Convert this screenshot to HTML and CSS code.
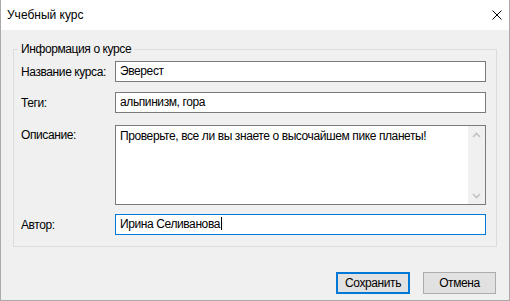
FILE: index.html
```html
<!DOCTYPE html>
<html lang="ru">
<head>
  <meta charset="UTF-8">
  <title>Учебный курс</title>
  <link rel="stylesheet" href="styles.css">
</head>
<body>
  <div class="window">
    <div class="titlebar">
      <span class="title">Учебный курс</span>
      <svg class="close" width="10" height="10" viewBox="0 0 10 10">
        <path d="M0.5 0.5 L9.5 9.5 M9.5 0.5 L0.5 9.5" stroke="#000" stroke-width="1" fill="none"/>
      </svg>
    </div>
    <div class="content">
      <fieldset class="group">
        <legend>Информация о курсе</legend>
        <div class="form">
          <label class="label">Название курса:</label>
          <div class="field">Эверест</div>

          <label class="label">Теги:</label>
          <div class="field">альпинизм, гора</div>

          <label class="label label-top desc">Описание:</label>
          <div class="memo desc">
            <div class="memo-text">Проверьте, все ли вы знаете о высочайшем пике планеты!</div>
            <div class="scrollbar">
              <svg width="9" height="6" viewBox="0 0 9 6"><path d="M1 5 L4.5 1.5 L8 5" stroke="#c2c2c2" stroke-width="1.6" fill="none"/></svg>
              <svg width="9" height="6" viewBox="0 0 9 6"><path d="M1 1 L4.5 4.5 L8 1" stroke="#c2c2c2" stroke-width="1.6" fill="none"/></svg>
            </div>
          </div>

          <label class="label author">Автор:</label>
          <div class="field field-focus author">Ирина Селиванова<span class="caret"></span></div>
        </div>
      </fieldset>
      <div class="buttons">
        <button class="btn btn-default">Сохранить</button>
        <button class="btn">Отмена</button>
      </div>
    </div>
  </div>
</body>
</html>
```

FILE: styles.css
```css
:root {
  --font-ui: "Segoe UI", "Liberation Sans", sans-serif;
  --color-face: #f0f0f0;
  --color-frame: #aaaaaa;
  --color-group: #dcdcdc;
  --color-edit: #7a7a7a;
  --color-focus: #0078d7;
  --color-button: #e1e1e1;
  --color-button-border: #adadad;
}

* {
  box-sizing: border-box;
}

body {
  margin: 0;
  font-family: var(--font-ui);
  font-size: 12px;
  color: #000;
  background: var(--color-face);
}

.window {
  width: 510px;
  height: 301px;
  border: 1px solid var(--color-frame);
  border-top: none;
  background: var(--color-face);
}

.titlebar {
  height: 30px;
  background: #fff;
  display: flex;
  align-items: center;
  justify-content: space-between;
  padding: 0 7px 0 6px;
}

.content {
  padding: 12px 12px 0 12px;
  letter-spacing: -0.4px;
}

.group {
  margin: 0;
  border: 1px solid var(--color-group);
  padding: 4px 10px 11px 7px;
}

.group legend {
  padding: 0 3px;
  margin-left: -3px;
  line-height: 15px;
}

.form {
  display: grid;
  grid-template-columns: 94px 371px;
  row-gap: 10px;
  align-items: center;
}

.label-top {
  align-self: start;
  padding-top: 3px;
}

.desc {
  margin-top: 2px;
}

.author {
  margin-top: -1px;
}

.field {
  height: 21px;
  background: #fff;
  border: 1px solid var(--color-edit);
  padding: 0 4px;
  line-height: 19px;
  white-space: nowrap;
}

.field-focus {
  border-color: var(--color-focus);
}

.caret {
  display: inline-block;
  width: 1px;
  height: 13px;
  margin-left: 1px;
  background: #000;
  vertical-align: -2px;
}

.memo {
  height: 80px;
  display: flex;
  background: #fff;
  border: 1px solid var(--color-edit);
}

.memo-text {
  flex: 1;
  padding: 2px 4px;
  line-height: 16px;
}

.scrollbar {
  width: 17px;
  background: var(--color-face);
  display: flex;
  flex-direction: column;
  justify-content: space-between;
  align-items: center;
  padding: 6px 0 5px;
}

.buttons {
  display: flex;
  justify-content: flex-end;
  gap: 13px;
  margin-top: 25px;
  padding-right: 1px;
}

.btn {
  width: 73px;
  height: 22px;
  padding: 0;
  font-family: var(--font-ui);
  font-size: 12px;
  letter-spacing: -0.4px;
  color: #000;
  background: var(--color-button);
  border: 1px solid var(--color-button-border);
}

.btn-default {
  width: 74px;
  border: 2px solid var(--color-focus);
}
```
